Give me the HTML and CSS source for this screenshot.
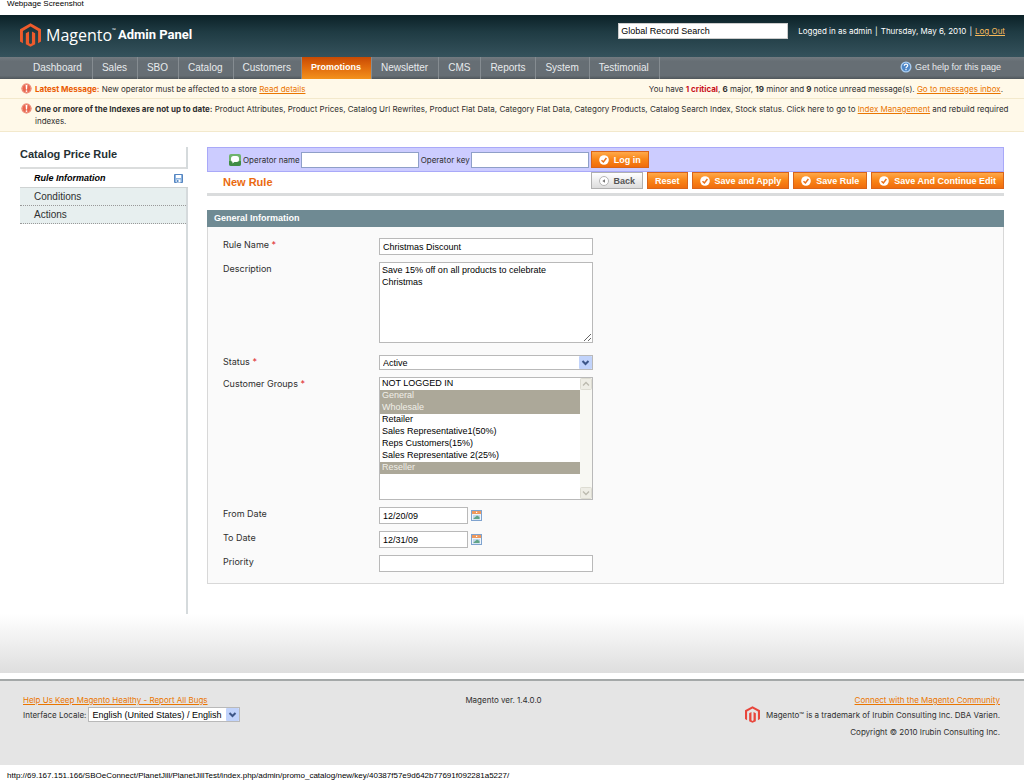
FILE: index.html
```html
<!DOCTYPE html>
<html lang="en">
<head>
<meta charset="utf-8">
<title>Magento Admin Panel</title>
<link rel="stylesheet" href="styles.css">
</head>
<body>
<svg class="defs" aria-hidden="true">
  <symbol id="mage" viewBox="0 0 36 40"><path d="M18 0 36 10v21l-5 3V13L18 5.500 5 13v21l-5-3V10z"/><path d="M15.500 14v20l2.500 1.500 2.500-1.500V14l5.500 3v19l-8 4-8-4V17z"/></symbol>
  <symbol id="alert" viewBox="0 0 12 12"><circle cx="6" cy="6" r="5.500" fill="#e8654e"/><circle cx="6" cy="6" r="4.700" fill="none" stroke="#f3a898" stroke-width=".8"/><path d="M5 2.300h2L6.600 7H5.400z" fill="#fff"/><circle cx="6" cy="8.800" r="1" fill="#fff"/></symbol>
  <symbol id="check" viewBox="0 0 10 10"><circle cx="5" cy="5" r="4.800" fill="#fff"/><path d="M2.500 5.200 4.400 7 7.400 3" fill="none" stroke="#e8701a" stroke-width="1.500"/></symbol>
  <symbol id="cal" viewBox="0 0 11 11"><rect x=".5" y=".5" width="10" height="10" fill="#eef4fa" stroke="#7fa3cf"/><path d="M1 1h9v3H1z" fill="#f0995c"/><path d="M5 1.800h1.200v1.200H5z" fill="#fff"/><path d="M2 5h7v4.500H2z" fill="#c4d8ea"/><path d="M2.500 8.500 6 5.500 8.500 7v2H2.500z" fill="#62a487"/></symbol>
</svg>

<p class="caption">Webpage Screenshot</p>

<header class="header">
  <div class="logo">
    <svg class="logo-mark" aria-hidden="true"><use href="#mage"/></svg>
    <span class="logo-name">Magento</span><span class="logo-tm">™</span>
    <span class="logo-sub">Admin Panel</span>
  </div>
  <div class="header-right">
    <input class="search" type="text" value="Global Record Search" aria-label="Global Record Search">
    <span>Logged in as admin</span><i>|</i><span>Thursday, May 6, 2010</span><i>|</i><a href="#">Log Out</a>
  </div>
</header>

<nav class="nav">
  <a href="#">Dashboard</a><a href="#">Sales</a><a href="#">SBO</a><a href="#">Catalog</a><a href="#">Customers</a><a href="#" class="active">Promotions</a><a href="#">Newsletter</a><a href="#">CMS</a><a href="#">Reports</a><a href="#">System</a><a href="#">Testimonial</a>
  <a href="#" class="help"><svg viewBox="0 0 12 12" aria-hidden="true"><circle cx="6" cy="6" r="5.500" fill="#a9cdf0"/><circle cx="6" cy="6" r="4.200" fill="#4d86c6"/><path d="M4.300 4.800C4.300 2.600 7.800 2.700 7.700 4.700 7.600 5.800 6 5.800 6 7.200M6 8.100v1.200" fill="none" stroke="#fff" stroke-width="1.200"/></svg>Get help for this page</a>
</nav>

<section class="notice">
  <svg class="alert" aria-hidden="true"><use href="#alert"/></svg>
  <p><b class="hot">Latest Message:</b> New operator must be affected to a store <a href="#">Read details</a></p>
  <p class="inbox">You have <b class="critical">1 critical</b>, <b>6</b> major, <b>19</b> minor and <b>9</b> notice unread message(s). <a href="#">Go to messages inbox</a>.</p>
</section>
<section class="notice notice-tall">
  <svg class="alert" aria-hidden="true"><use href="#alert"/></svg>
  <p><b>One or more of the Indexes are not up to date:</b> Product Attributes, Product Prices, Catalog Url Rewrites, Product Flat Data, Category Flat Data, Category Products, Catalog Search Index, Stock status. Click here to go to <a href="#">Index Management</a> and rebuild required indexes.</p>
</section>

<div class="middle">
  <aside class="side">
    <h3>Catalog Price Rule</h3>
    <a href="#" class="tab current">Rule Information
      <svg viewBox="0 0 9 9" aria-hidden="true"><path d="M.5.500h8v8h-8z" fill="#8db4e0" stroke="#5585c0"/><path d="M2 1h5v3H2zM2.500 5.500h4v3h-4z" fill="#fff"/><path d="M3 6h1.500v2H3z" fill="#5d8dc6"/></svg></a>
    <a href="#" class="tab">Conditions</a>
    <a href="#" class="tab">Actions</a>
  </aside>

  <main class="main">
    <form class="operator">
      <svg viewBox="0 0 12 12" aria-hidden="true"><rect width="12" height="12" rx="2" fill="#6fb36c"/><path d="M0 7h12v3a2 2 0 0 1-2 2H2a2 2 0 0 1-2-2z" fill="#3f8c45"/><rect x="2" y="2" width="8" height="6" rx="2.500" fill="#fff"/><path d="M3.500 7v2.500L6 7.500z" fill="#fff"/></svg>
      <label for="op-name">Operator name</label><input id="op-name" type="text">
      <label for="op-key">Operator key</label><input id="op-key" type="text">
      <button type="button" class="btn"><svg aria-hidden="true"><use href="#check"/></svg>Log in</button>
    </form>

    <div class="title-bar">
      <h1>New Rule</h1>
      <button type="button" class="btn back"><svg viewBox="0 0 10 10" aria-hidden="true"><circle cx="5" cy="5" r="4.500" fill="#fff" stroke="#b5b5b5"/><path d="M3.300 5 6 3.200v3.600z" fill="#777"/></svg>Back</button>
      <button type="button" class="btn">Reset</button>
      <button type="button" class="btn"><svg aria-hidden="true"><use href="#check"/></svg>Save and Apply</button>
      <button type="button" class="btn"><svg aria-hidden="true"><use href="#check"/></svg>Save Rule</button>
      <button type="button" class="btn"><svg aria-hidden="true"><use href="#check"/></svg>Save And Continue Edit</button>
    </div>

    <h2 class="panel-head">General Information</h2>
    <form class="panel">
      <label for="name">Rule Name <em>*</em></label>
      <input id="name" type="text" value="Christmas Discount">
      <label for="desc">Description</label>
      <textarea id="desc">Save 15% off on all products to celebrate Christmas</textarea>
      <label for="status">Status <em>*</em></label>
      <div class="select"><select id="status"><option>Active</option><option>Inactive</option></select><svg viewBox="0 0 13 13" aria-hidden="true"><rect width="13" height="13" rx="1" fill="#c1d3fb"/><path d="m3.500 5 3 3 3-3" fill="none" stroke="#3d5688" stroke-width="2"/></svg></div>
      <label for="groups">Customer Groups <em>*</em></label>
      <div class="list">
        <select id="groups" multiple size="10">
          <option>NOT LOGGED IN</option>
          <option selected>General</option>
          <option selected>Wholesale</option>
          <option>Retailer</option>
          <option>Sales Representative1(50%)</option>
          <option>Reps Customers(15%)</option>
          <option>Sales Representative 2(25%)</option>
          <option selected>Reseller</option>
        </select>
        <div class="scroll" aria-hidden="true">
          <svg viewBox="0 0 12 12"><rect x=".5" y=".5" width="11" height="11" rx="1" fill="#eeede5" stroke="#dddcd2"/><path d="m3 7.500 3-3 3 3" fill="none" stroke="#bbb9ae" stroke-width="1.300"/></svg>
          <svg viewBox="0 0 12 12"><rect x=".5" y=".5" width="11" height="11" rx="1" fill="#eeede5" stroke="#dddcd2"/><path d="m3 4.500 3 3 3-3" fill="none" stroke="#bbb9ae" stroke-width="1.300"/></svg>
        </div>
      </div>
      <label for="from">From Date</label>
      <div class="date"><input id="from" type="text" value="12/20/09"><svg aria-hidden="true"><use href="#cal"/></svg></div>
      <label for="to">To Date</label>
      <div class="date"><input id="to" type="text" value="12/31/09"><svg aria-hidden="true"><use href="#cal"/></svg></div>
      <label for="priority">Priority</label>
      <input id="priority" type="text">
    </form>
  </main>
</div>

<div class="fade"></div>

<footer class="footer">
  <div>
    <a href="#">Help Us Keep Magento Healthy - Report All Bugs</a>
    <div class="locale"><label for="locale">Interface Locale:</label>
      <div class="select"><select id="locale"><option>English (United States) / English</option></select><svg viewBox="0 0 13 13" aria-hidden="true"><rect width="13" height="13" rx="1" fill="#c1d3fb"/><path d="m3.500 5 3 3 3-3" fill="none" stroke="#3d5688" stroke-width="2"/></svg></div>
    </div>
  </div>
  <p class="version">Magento ver. 1.4.0.0</p>
  <div class="legal">
    <a href="#">Connect with the Magento Community</a>
    <p><svg aria-hidden="true"><use href="#mage"/></svg>Magento™ is a trademark of Irubin Consulting Inc. DBA Varien.</p>
    <p>Copyright © 2010 Irubin Consulting Inc.</p>
  </div>
</footer>
<p class="url">http://69.167.151.166/SBOeConnect/PlanetJill/PlanetJillTest/index.php/admin/promo_catalog/new/key/40387f57e9d642b77691f092281a5227/</p>
</body>
</html>
```

FILE: styles.css
```css
* { box-sizing: border-box; }

body {
  margin: 0;
  background: #fff;
  color: #2f2f2f;
  font: 8px/12px Inter, "Liberation Sans", sans-serif;
}

p, h1, h2, h3 { margin: 0; }
a { color: #ea7601; }
svg { display: block; flex: none; }
.defs { position: absolute; width: 0; height: 0; }

.caption, .url {
  padding-left: 7px;
  color: #000;
  font: 8px/22px "Liberation Sans", Arial, sans-serif;
}
.caption { height: 15px; line-height: 8px; }
.url { height: 16px; }

/* Header */
.header {
  display: flex;
  justify-content: space-between;
  align-items: flex-start;
  height: 42px;
  padding: 8px 19px 0 20px;
  background: linear-gradient(#0b2127, #1f3b43 40%, #35525c);
  color: #fff;
}
.logo { display: flex; align-items: center; height: 24px; }
.logo-mark { width: 21px; height: 24px; margin-right: 5px; fill: #ee5b2c; }
.logo-name { font: 16px/24px "Open Sans", sans-serif; }
.logo-tm { align-self: flex-start; font: 5px/14px "Open Sans", sans-serif; }
.logo-sub { margin-left: 2px; font: bold 13px/24px Roboto, "Liberation Sans", sans-serif; }
.header-right { display: flex; align-items: center; }
.header-right i { margin: 0 3px; font-style: normal; }
.header-right a { color: #f6b95a; }
.header-right .search { width: 170px; height: 16px; margin-right: 10px; padding: 0 2px; border-color: #ccc; }

/* Navigation */
.nav {
  display: flex;
  height: 22px;
  padding: 0 23px 0 24px;
  background: linear-gradient(#737a80, #666e74 20%, #666e74 85%, #4f565b);
  font: 10px/21px "Liberation Sans", Arial, sans-serif;
}
.nav a {
  padding: 0 10px 0 9px;
  border-right: 1px solid #858c91;
  color: #e8ebed;
  text-decoration: none;
}
.nav a.active {
  background: linear-gradient(#c84a04, #e0690c 45%, #f3921c);
  color: #fff;
  font-size: 9px;
  font-weight: bold;
}
.nav a.help {
  display: flex;
  align-items: center;
  gap: 3px;
  margin-left: auto;
  padding: 0 0 2px;
  border: 0;
  font: 9px/19px "Liberation Sans", Arial, sans-serif;
}
.help svg { width: 12px; height: 12px; }

/* Notices */
.notice {
  display: flex;
  gap: 3px;
  padding: 4px 21px 3px;
  border-bottom: 1px solid #f3e9cc;
  background: #fff9e9;
}
.notice .alert { width: 11px; height: 11px; }
.notice .inbox { margin-left: auto; }
.notice-tall { padding: 4px 12px 4px 21px; }
.hot { color: #ea5b01; }
.critical { color: #c8101a; }

/* Columns */
.middle {
  display: flex;
  gap: 19px;
  padding: 15px 20px 0;
}
.side {
  width: 168px;
  min-height: 467px;
  border-right: 2px solid #d5dadc;
  font: 10px/18px "Liberation Sans", Arial, sans-serif;
}
.side h3 {
  height: 22px;
  border-bottom: 2px solid #dbdddd;
  color: #253033;
  font: bold 11px/14px "Liberation Sans", Arial, sans-serif;
}
.tab {
  display: flex;
  justify-content: space-between;
  align-items: center;
  padding: 0 5px 0 14px;
  border-bottom: 1px dotted #999;
  background: #e7efef;
  color: #2f2f2f;
  line-height: 17px;
  text-decoration: none;
}
.tab.current {
  margin-right: -2px;
  border-bottom: 1px solid #cfd3d3;
  background: #fff;
  color: #000;
  font-size: 9px;
  font-style: italic;
  font-weight: bold;
  line-height: 18px;
}
.tab svg { width: 9px; height: 9px; }
.main { flex: 1; }

/* Operator strip */
.operator {
  display: flex;
  align-items: center;
  height: 25px;
  padding-left: 21px;
  border: 1px solid #a9a9f8;
  background: #ccccff;
}
.operator > svg { width: 12px; height: 12px; margin-right: 2px; }
.operator input { width: 118px; height: 16px; margin: 0 2px 0 1px; border: 1px solid #8f9fc8; }

input, textarea, .select, .list {
  border: 1px solid #b9b9b9;
  background: #fff;
}
input, textarea, select {
  margin: 0;
  color: #000;
  font: 9px/12px "Liberation Sans", Arial, sans-serif;
}
input { height: 17px; padding: 0 3px; }

.btn {
  display: flex;
  align-items: center;
  height: 17px;
  padding: 0 7px;
  border: 1px solid #d9641a;
  background: linear-gradient(#ffa94a, #f98518 50%, #f06c0c);
  color: #fff;
  font: bold 9px/12px "Liberation Sans", Arial, sans-serif;
}
.btn svg { width: 10px; height: 10px; margin-right: 5px; }
.btn.back {
  border-color: #b0b0b0;
  background: linear-gradient(#fff, #dcdcdc);
  color: #555;
}

.title-bar {
  display: flex;
  gap: 4px;
  height: 24px;
  border-bottom: 3px solid #dadcdd;
}
.title-bar h1 {
  margin-right: auto;
  padding-left: 16px;
  color: #ea6a10;
  font: bold 11px/20px "Liberation Sans", Arial, sans-serif;
}

/* Form panel */
.panel-head {
  margin-top: 14px;
  padding-left: 7px;
  background: #6f8a93;
  color: #fff;
  font: bold 9px/17px "Liberation Sans", Arial, sans-serif;
}
.panel {
  display: grid;
  grid-template-columns: 149px 214px;
  gap: 7px;
  padding: 11px 15px;
  border: 1px solid #d8d8d8;
  border-top: 0;
  background: #fafafa;
  font-size: 9px;
  line-height: 14px;
}
.panel em { color: #e0282e; font-style: normal; }
textarea { height: 81px; margin-bottom: 5px; padding: 1px 18px 1px 2px; }
.select {
  display: flex;
  align-items: center;
  height: 15px;
}
.select select {
  flex: 1;
  min-width: 0;
  height: 13px;
  padding: 0 3px;
  border: 0;
  background: none;
  appearance: none;
}
.select svg { width: 13px; height: 13px; }
.list { display: flex; height: 123px; }
.list select {
  flex: 1;
  padding: 0;
  border: 0;
  border-radius: 0;
  overflow: hidden;
  outline: 0;
}
.list option {
  min-height: 12px;
  padding: 0 2px;
  font: 9px/12px "Liberation Sans", Arial, sans-serif;
}
.list option:checked {
  background: #aca899 linear-gradient(#aca899, #aca899);
  color: #f0efe8;
}
.scroll {
  display: flex;
  flex-direction: column;
  justify-content: space-between;
  background: #f8f8f3;
}
.scroll svg { width: 12px; height: 12px; }
.date { display: flex; align-items: center; gap: 3px; }
.date input { width: 89px; }
.date svg { width: 11px; height: 11px; }

/* Footer */
.fade {
  height: 59px;
  background: linear-gradient(#fff, #dedede);
}
.footer {
  display: grid;
  grid-template-columns: 1fr auto 1fr;
  min-height: 86px;
  margin-top: 6px;
  padding: 13px 24px 0 23px;
  border-top: 2px solid #a4a8a8;
  background: #e5e5e5;
}
.version { padding-right: 16px; }
.locale { display: flex; align-items: center; gap: 2px; margin-top: 1px; }
.locale .select { width: 152px; }
.legal { text-align: right; }
.legal p { display: flex; align-items: center; justify-content: flex-end; height: 17px; }
.legal svg { width: 15px; height: 17px; margin-right: 6px; fill: #e8463c; }
```
